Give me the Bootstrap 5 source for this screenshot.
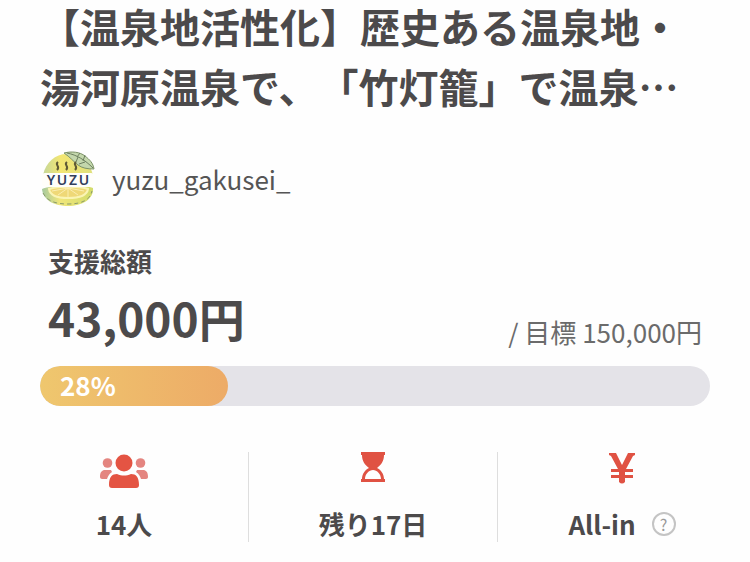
<!DOCTYPE html>
<html lang="ja">
<head>
<meta charset="utf-8">
<meta name="viewport" content="width=device-width, initial-scale=1">
<title>湯河原温泉 竹灯籠プロジェクト</title>
<link href="https://cdn.jsdelivr.net/npm/bootstrap@5.3.0/dist/css/bootstrap.min.css" rel="stylesheet">
<style>
  body { font-family: "Noto Sans CJK JP", "Noto Sans", sans-serif; color: #4c4a4b; background: #fefefe; }
  .project { padding: 0 40px; }
  .project-title { font-size: 40px; line-height: 60px; margin: -4px 0 35px; text-spacing-trim: space-all; }
  .owner { font-size: 26px; line-height: 40px; color: #555; gap: 16px; }
  .avatar { width: 56px; height: 56px; }
  .funding { padding: 0 8px; margin-top: 36px; }
  .funding-label { font-size: 26px; line-height: 36px; }
  .amount { font-size: 46px; line-height: 60px; }
  .goal { font-size: 26px; line-height: 30px; color: #6b6b6b; }
  .goal-bar { height: 40px; border-radius: 20px; background: #e4e3e8; margin-top: 19px; }
  .goal-fill { border-radius: 20px; padding-left: 20px; font-size: 26px; line-height: 36px; padding-bottom: 2px; text-align: left; background: linear-gradient(90deg, #efc76e, #edab67); }
  .stats { margin-top: 46px; }
  .stat { height: 90px; font-size: 26px; line-height: 36px; }
  .stat + .stat { border-left: 1px solid #dedede; }
  .stat svg { display: block; }
  .help { width: 24px; height: 24px; border: 2px solid #c4c4c4; color: #999; font-size: 16px; line-height: 20px; }
</style>
<script src="https://cdn.jsdelivr.net/npm/bootstrap@5.3.0/dist/js/bootstrap.bundle.min.js"></script>
</head>
<body>
<main>
  <div class="project">
    <h1 class="project-title fw-bold">【温泉地活性化】歴史ある温泉地・<br>湯河原温泉で、「竹灯籠」で温泉…</h1>

    <div class="owner d-flex align-items-center">
      <svg class="avatar" viewBox="0 0 56 56" aria-hidden="true">
        <defs>
          <linearGradient id="peel"><stop offset="0" stop-color="#c5d79a"/><stop offset=".35" stop-color="#f3e672"/><stop offset="1" stop-color="#dfe07c"/></linearGradient>
          <linearGradient id="rind"><stop offset="0" stop-color="#a5c9a0"/><stop offset=".35" stop-color="#f0e67a"/><stop offset="1" stop-color="#d3dc6c"/></linearGradient>
        </defs>
        <path d="M3 24C6 11 15 3 27 3c14 0 23 9 26 21z" fill="url(#peel)"/>
        <path d="M24 2c8-2 16-1 21 3 5 4 8 7 9 13-7 0-12-1-16-4-4-3-8-8-14-12z" fill="#c3d7ac" stroke="#7c9268"/>
        <path d="M27 2c10 2 18 7 26 15M37 6l3-4M43 10l2-6M38 6l-2 5M45 11l-6 2" fill="none" stroke="#6d8060"/>
        <path d="M18 11c-4 3 3 4-1 8M27 11c-4 3 3 4-1 8M36 11c-4 3 3 4-1 8" fill="none" stroke="#5f5a36" stroke-width="2"/>
        <path d="M2 38c7-4 44-5 51-1 1 11-11 18-25 18S3 49 2 38z" fill="url(#rind)"/>
        <path d="M9 38c9-3 31-3 39 0-1 6-9 9-20 9S10 44 9 38z" fill="#efd877" stroke="#faf4b4" stroke-width="2"/>
        <path d="M28 37v9M28 37l-10 7M28 37l10 7M28 37l-16 3M28 37l16 3" stroke="#fbeeb0"/>
        <path d="M3 42c4 8 12 11 25 11 14 0 22-4 24-13" fill="none" stroke="#8a9a6c" stroke-dasharray="4 3"/>
        <rect x="2" y="22" width="52" height="14" rx="3" fill="#fffefa"/>
        <g font-family="Noto Sans, sans-serif" font-size="14" font-weight="600" fill="#33405c" text-anchor="middle"><text x="28" y="34"><tspan x="11">Y</tspan><tspan x="22">U</tspan><tspan x="33">Z</tspan><tspan x="44">U</tspan></text></g>
      </svg>
      <span>yuzu_gakusei_</span>
    </div>

    <section>
      <div class="funding">
        <div class="funding-label fw-bold">支援総額</div>
        <div class="d-flex justify-content-between align-items-end mt-2">
          <div class="amount fw-bold">43,000円</div>
          <div class="goal">/ 目標 150,000円</div>
        </div>
      </div>
      <div class="progress goal-bar" role="progressbar" aria-label="支援の達成率" aria-valuenow="28" aria-valuemin="0" aria-valuemax="100">
        <div class="progress-bar goal-fill fw-bold" style="width: 28%">28%</div>
      </div>
    </section>
  </div>

  <section class="stats row flex-nowrap g-0 fw-bold pe-1">
    <div class="stat col d-flex flex-column align-items-center justify-content-between">
      <svg width="48" height="38" viewBox="0 0 48 38" aria-hidden="true">
        <g fill="#e48580"><circle cx="7.500" cy="11" r="4.800"/><circle cx="40.500" cy="11" r="4.800"/>
        <path d="M0 25c0-5 2-7 5-7h6l1 2c-3 2-4 4-5 7H2c-1 0-2-1-2-2zM48 25c0-5-2-7-5-7h-6l-1 2c3 2 4 4 5 7h5c1 0 2-1 2-2z"/></g>
        <circle cx="24" cy="11" r="8.500" fill="#e45443"/><path d="M9 33c0-8 3-11 8-11 5 2 9 2 14 0 5 0 8 3 8 11 0 2-1 3-3 3H12c-2 0-3-1-3-3z" fill="#e45443"/>
      </svg>
      <div>14人</div>
    </div>
    <div class="stat col d-flex flex-column align-items-center justify-content-between">
      <svg width="26" height="32" viewBox="0 0 26 32" aria-hidden="true">
        <path d="M1 0h24v3h-1c0 6-3 10-7 13 4 2 7 6 7 11h1v3H1v-3h1c0-5 3-9 7-11-4-3-7-7-7-13H1zM5 27h16c0-5-4-9-8-9s-8 4-8 9z" fill="#e05243" fill-rule="evenodd"/>
      </svg>
      <div>残り17日</div>
    </div>
    <div class="stat col d-flex flex-column align-items-center justify-content-between">
      <svg width="26" height="32" viewBox="0 0 26 32" aria-hidden="true">
        <path d="M0 1h7l6 12 6-12h7v2l-2 1-7 13h7v3h-8v3h8v3h-8v4q-3 3-6 0v-4H2v-3h8v-3H2v-3h7L2 4 0 3z" fill="#e05243"/>
      </svg>
      <div class="d-flex align-items-center gap-3">All-in <button type="button" class="help btn p-0 rounded-circle" aria-label="All-in方式について">?</button></div>
    </div>
  </section>
</main>
</body>
</html>
